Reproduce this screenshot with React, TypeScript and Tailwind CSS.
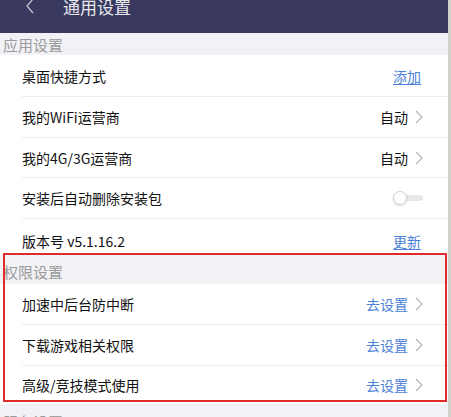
import React from 'react';

const Chevron = () => (
  <svg width="8" height="14" viewBox="0 0 8 14" className="ml-[7px]">
    <path d="M1 1 L7 7 L1 13" fill="none" stroke="#b5b5b5" strokeWidth="1.2" />
  </svg>
);

const Toggle = () => (
  <div className="relative w-[30px] h-[14px]">
    <div className="absolute left-[7px] right-0 top-[4px] h-[6px] rounded-full bg-[#e8e8e8]" />
    <div className="absolute left-0 top-0 w-[14px] h-[14px] rounded-full bg-white border border-[#d4d4d4] shadow-sm" />
  </div>
);

type RowProps = {
  label: string;
  right?: React.ReactNode;
  last?: boolean;
  h?: string;
};

const Row = ({ label, right, last, h = 'h-[41px]' }: RowProps) => (
  <div className="pl-[22px] bg-white shrink-0">
    <div className={`${h} flex items-center justify-between pr-[25px] ${last ? '' : 'border-b border-[#ececec]'}`}>
      <span className="text-[14px] text-[#111] leading-none">{label}</span>
      {right}
    </div>
  </div>
);

const Section = ({ title, h = 'h-[22px]', pt = '' }: { title: string; h?: string; pt?: string }) => (
  <div className={`${h} ${pt} shrink-0 bg-[#f1f1f6] flex items-center pl-[3px]`}>
    <span className="text-[15px] text-[#9b9b9b] leading-none">{title}</span>
  </div>
);

const Auto = () => (
  <div className="flex items-center">
    <span className="text-[14px] text-[#111] leading-none">自动</span>
    <Chevron />
  </div>
);

const GoSet = () => (
  <div className="flex items-center">
    <span className="text-[14px] text-[#4a80d6] leading-none">去设置</span>
    <Chevron />
  </div>
);

const Link = ({ text }: { text: string }) => (
  <span className="text-[14px] text-[#4a80d6] underline underline-offset-2 leading-none mr-[2px]">{text}</span>
);

const App = () => {
  return (
    <div
      className="w-[451px] h-[417px] overflow-hidden bg-[#cfd3c9] flex"
      style={{ fontFamily: '"Noto Sans CJK SC", "Noto Sans", sans-serif' }}
    >
      <div className="w-[448px] bg-white flex flex-col">
        <header className="h-[33px] shrink-0 bg-[#3a3a60] flex items-center pb-[20px]">
          <svg width="10" height="16" viewBox="0 0 10 16" className="ml-[25px] mt-[-2px]">
            <path d="M8 1 L2 8 L8 15" fill="none" stroke="#c8c8d8" strokeWidth="1.2" />
          </svg>
          <span className="ml-[28px] text-[17px] text-[#e8e8ee] leading-none">通用设置</span>
        </header>

        <Section title="应用设置" />
        <Row label="桌面快捷方式" h="h-[42px]" right={<Link text="添加" />} />
        <Row label="我的WiFi运营商" right={<Auto />} />
        <Row label="我的4G/3G运营商" h="h-[40px]" right={<Auto />} />
        <Row label="安装后自动删除安装包" right={<Toggle />} />
        <Row label="版本号 v5.1.16.2" last h="h-[35px] pt-[8px]" right={<Link text="更新" />} />

        <div className="relative shrink-0">
          <Section title="权限设置" h="h-[30px]" pt="pt-[4px]" />
          <Row label="加速中后台防中断" right={<GoSet />} />
          <Row label="下载游戏相关权限" right={<GoSet />} />
          <Row label="高级/竞技模式使用" last h="h-[38px]" right={<GoSet />} />
          <div className="absolute left-[3px] right-[1px] top-[-1px] bottom-[2px] border-2 border-[#e02b2b] pointer-events-none" />
        </div>

        <Section title="服务设置" h="h-[30px]" pt="pt-[4px]" />
      </div>
    </div>
  );
};

export default App;
